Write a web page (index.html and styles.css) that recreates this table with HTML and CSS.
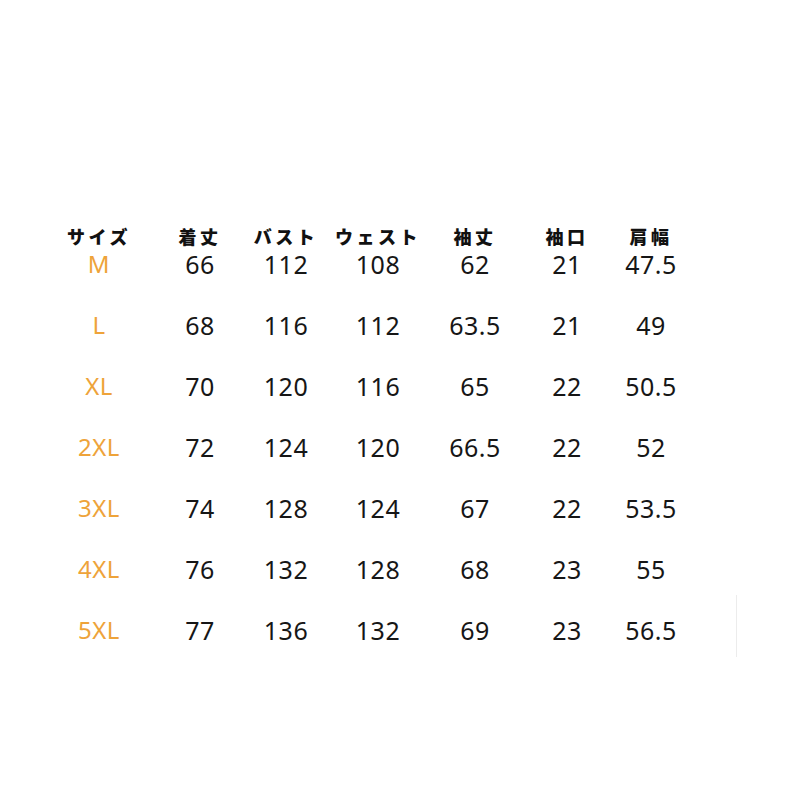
FILE: index.html
```html
<!DOCTYPE html>
<html lang="ja">
<head>
<meta charset="utf-8">
<link rel="stylesheet" href="styles.css">
</head>
<body>
<div class="page">
  <div class="table">
    <div class="row head">
      <div>サイズ</div><div>着丈</div><div>バスト</div><div>ウェスト</div><div>袖丈</div><div>袖口</div><div>肩幅</div>
    </div>
    <div class="rows">
      <div class="row"><div class="size">M</div><div>66</div><div>112</div><div>108</div><div>62</div><div>21</div><div>47.5</div></div>
      <div class="row"><div class="size">L</div><div>68</div><div>116</div><div>112</div><div>63.5</div><div>21</div><div>49</div></div>
      <div class="row"><div class="size">XL</div><div>70</div><div>120</div><div>116</div><div>65</div><div>22</div><div>50.5</div></div>
      <div class="row"><div class="size">2XL</div><div>72</div><div>124</div><div>120</div><div>66.5</div><div>22</div><div>52</div></div>
      <div class="row"><div class="size">3XL</div><div>74</div><div>128</div><div>124</div><div>67</div><div>22</div><div>53.5</div></div>
      <div class="row"><div class="size">4XL</div><div>76</div><div>132</div><div>128</div><div>68</div><div>23</div><div>55</div></div>
      <div class="row"><div class="size">5XL</div><div>77</div><div>136</div><div>132</div><div>69</div><div>23</div><div>56.5</div></div>
    </div>
  </div>
  <div class="edge"></div>
</div>
</body>
</html>
```
FILE: styles.css
```css
html, body {
  margin: 0;
  padding: 0;
  background: #ffffff;
}
.page {
  position: relative;
  width: 800px;
  height: 800px;
  overflow: hidden;
}
.table {
  padding-top: 222px;
  padding-left: 50px;
}
.row {
  display: grid;
  grid-template-columns: 98px 104px 68px 116px 78px 106px 62px;
  height: 28px;
  align-items: center;
  justify-items: center;
  font-family: "Noto Sans", "Open Sans", sans-serif;
  font-size: 25px;
  color: #161616;
  letter-spacing: 0.5px;
  white-space: nowrap;
}
.row > div {
  line-height: 28px;
}
.head {
  font-family: "Noto Sans CJK JP", sans-serif;
  font-weight: 900;
  font-size: 18px;
  letter-spacing: 3.5px;
  color: #111;
}
.rows {
  display: flex;
  flex-direction: column;
  gap: 33px;
}
.size {
  color: #eea33a;
  font-size: 24px;
}
.edge {
  position: absolute;
  left: 736px;
  top: 595px;
  width: 1px;
  height: 62px;
  background: #ececec;
}
```
